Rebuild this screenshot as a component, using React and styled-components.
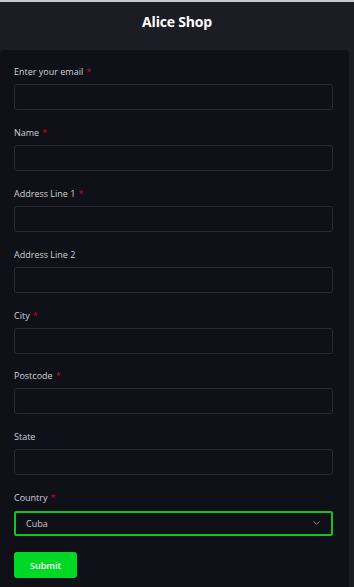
import styled, { createGlobalStyle } from "styled-components";

const GlobalStyle = createGlobalStyle`
  * {
    box-sizing: border-box;
  }
  body {
    margin: 0;
    background-color: #1b1c24;
    font-family: "Open Sans", "Noto Sans", sans-serif;
  }
`;

const fields = [
  { label: "Enter your email", required: true },
  { label: "Name", required: true },
  { label: "Address Line 1", required: true },
  { label: "Address Line 2", required: false },
  { label: "City", required: true },
  { label: "Postcode", required: true },
  { label: "State", required: false },
];

function App() {
  return (
    <>
      <GlobalStyle />
      <Page>
        <Header>
          <Title>Alice Shop</Title>
        </Header>
        <Card>
          <Form onSubmit={(e) => e.preventDefault()}>
            {fields.map((f) => (
              <Field key={f.label}>
                <Label>
                  {f.label}
                  {f.required && <Star>*</Star>}
                </Label>
                <Input type="text" />
              </Field>
            ))}
            <Field>
              <Label>
                Country<Star>*</Star>
              </Label>
              <SelectWrap>
                <Select defaultValue="Cuba">
                  <option>Cuba</option>
                  <option>Canada</option>
                  <option>Chile</option>
                </Select>
                <Chevron width="7" height="4" viewBox="0 0 7 4">
                  <path
                    d="M0.5 0.5 L3.5 3.3 L6.5 0.5"
                    fill="none"
                    stroke="#8a8b93"
                    strokeWidth="1"
                  />
                </Chevron>
              </SelectWrap>
            </Field>
            <SubmitBtn type="submit">Submit</SubmitBtn>
          </Form>
        </Card>
      </Page>
    </>
  );
}

export default App;

const Page = styled.div`
  min-height: 587px;
  display: flex;
  flex-direction: column;
  border-top: 2px solid #c9c9cc;
`;

const Header = styled.div`
  height: 48px;
  display: flex;
  align-items: center;
  justify-content: center;
`;

const Title = styled.h1`
  margin: 0 0 9px;
  font-size: 14px;
  font-weight: 700;
  color: #ffffff;
  letter-spacing: -0.2px;
`;

const Card = styled.div`
  flex: 1;
  margin-right: 5px;
  background-color: #101118;
  border-radius: 4px 4px 0 0;
  padding: 15px 16px 10px 14px;
`;

const Form = styled.form`
  display: flex;
  flex-direction: column;
`;

const Field = styled.div`
  display: flex;
  flex-direction: column;
  margin-bottom: 15.9px;
`;

const Label = styled.label`
  font-size: 9px;
  line-height: 13px;
  color: #cfd0d6;
  margin-bottom: 6px;
`;

const Star = styled.span`
  color: #d0021b;
  margin-left: 3px;
`;

const Input = styled.input`
  height: 26px;
  width: 100%;
  background-color: #101118;
  border: 1px solid #2a2b33;
  border-radius: 3px;
  color: #d0d0d6;
  font-family: inherit;
  font-size: 9px;
  padding: 0 11px;
  outline: none;
`;

const SelectWrap = styled.div`
  position: relative;
`;

const Select = styled.select`
  appearance: none;
  height: 25px;
  width: 100%;
  background-color: #101118;
  border: 2px solid #14c222;
  border-radius: 2px;
  color: #c8c9cf;
  font-family: inherit;
  font-size: 9px;
  padding: 0 10px;
  outline: none;
`;

const Chevron = styled.svg`
  position: absolute;
  right: 13px;
  top: 11px;
  pointer-events: none;
`;

const SubmitBtn = styled.button`
  align-self: flex-start;
  width: 63px;
  height: 26px;
  margin-top: 0;
  background-color: #00d924;
  border: none;
  border-radius: 3px;
  color: #ffffff;
  font-family: inherit;
  font-size: 9px;
  font-weight: 600;
  cursor: pointer;
`;
